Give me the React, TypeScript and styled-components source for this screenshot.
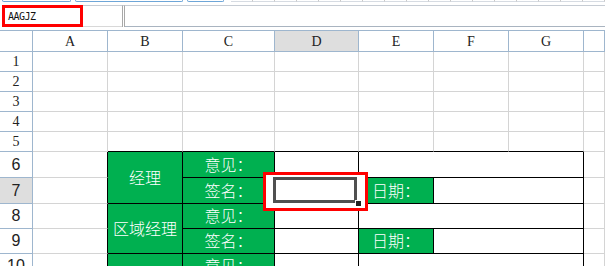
import React from 'react'
import styled, { createGlobalStyle } from 'styled-components'

const GRID = '#d4d4d4'
const HEAD = '#9eb6ce'
const INK = '#000'
const GREEN = '#00b050'

const GlobalStyle = createGlobalStyle`
  html, body {
    margin: 0;
    padding: 0;
    background: #fff;
    overflow: hidden;
  }
  #root {
    width: 605px;
    height: 266px;
    overflow: hidden;
  }
`

const TopStrip = styled.div`
  display: flex;
  align-items: flex-start;
  height: 5px;
  padding-left: 2px;
  gap: 4px;
`

const TabStub = styled.div<{ $w: number }>`
  width: ${p => p.$w}px;
  height: 1px;
  border: 1px solid #6ea6d8;
  border-top: none;
  border-radius: 0 0 3px 3px;
`

const TickRow = styled.div`
  flex: 1;
  height: 2px;
  display: flex;
  margin-left: 3px;
`

const Tick = styled.div`
  width: 22px;
  flex: none;
  border-right: 1px solid #c9c9c9;
  border-bottom: 1px solid #d6dbe2;
  box-sizing: border-box;
`

const FormulaRow = styled.div`
  display: flex;
  height: 22px;
`

const NameBox = styled.div`
  box-sizing: border-box;
  margin-left: 2px;
  width: 81px;
  height: 22px;
  border: 3px solid #ff0000;
  display: flex;
  align-items: center;
  padding-left: 3px;
  font-family: 'DejaVu Sans Mono', 'Liberation Mono', monospace;
  font-size: 10px;
  letter-spacing: -0.5px;
  color: #111;
`

const NameGap = styled.div`
  width: 39px;
  border-top: 1px solid #c6ccd4;
  border-bottom: 1px solid #d8d8d8;
  box-sizing: border-box;
`

const Divider = styled.div`
  width: 3px;
  box-sizing: border-box;
  border-left: 1px solid #a8a8a8;
  border-right: 1px solid #a8a8a8;
  border-top: 1px solid #c6ccd4;
`

const FormulaInput = styled.div`
  flex: 1;
  box-sizing: border-box;
  border-top: 1px solid #c6ccd4;
  border-bottom: 1px solid #a9b4c0;
`

const Sheet = styled.div`
  margin-top: 3px;
  display: grid;
  grid-template-columns: 33px 75px 75px 92px 84px 75px 75px 75px 1fr;
  grid-template-rows: 21px repeat(5, 20px) 26px 26px 25px 25px 25px;
  border-top: 1px solid ${HEAD};
`

const Cell = styled.div<{ $r?: string; $b?: string; $cols?: number; $rows?: number }>`
  box-sizing: border-box;
  position: relative;
  border-right: 1px solid ${p => p.$r ?? GRID};
  border-bottom: 1px solid ${p => p.$b ?? GRID};
  grid-column: span ${p => p.$cols ?? 1};
  grid-row: span ${p => p.$rows ?? 1};
  background: #fff;
  display: flex;
  align-items: center;
  justify-content: center;
`

const GreenCell = styled(Cell)`
  background: ${GREEN};
  color: #fff;
  font-family: 'Noto Sans CJK SC', 'Noto Sans', sans-serif;
  font-size: 16px;
  font-weight: 300;
  line-height: 1;
  padding-bottom: 2px;
`

const ColHead = styled(Cell)<{ $sel?: boolean }>`
  border-right-color: ${HEAD};
  border-bottom-color: ${HEAD};
  background: ${p => (p.$sel ? '#dedede' : '#fff')};
  font-family: 'Liberation Serif', 'Times New Roman', serif;
  font-size: 14px;
  color: #222;
  padding-top: 1px;
`

const RowHead = styled(Cell)<{ $sel?: boolean; $big?: boolean }>`
  border-right-color: ${HEAD};
  border-bottom-color: ${HEAD};
  background: ${p => (p.$sel ? '#dedede' : '#fff')};
  font-family: ${p =>
    p.$big ? "'Liberation Sans', Arial, sans-serif" : "'Liberation Serif', 'Times New Roman', serif"};
  font-size: ${p => (p.$big ? 16 : 14)}px;
  color: #222;
`

const Annotation = styled.div`
  position: absolute;
  left: -12px;
  top: -6px;
  width: 105px;
  height: 39px;
  box-sizing: border-box;
  border: 3px solid #ff0000;
  background: #fff;
  z-index: 2;
`

const Selection = styled.div`
  position: absolute;
  left: -2px;
  top: -1px;
  width: 84px;
  height: 26px;
  box-sizing: border-box;
  border: 3px solid #505050;
  z-index: 3;
`

const FillHandle = styled.div`
  position: absolute;
  left: 80px;
  top: 22px;
  width: 7px;
  height: 7px;
  box-sizing: border-box;
  border: 1px solid #fff;
  background: #222;
  z-index: 4;
`

const columns = ['A', 'B', 'C', 'D', 'E', 'F', 'G', '']

export default function App() {
  return (
    <>
      <GlobalStyle />
      <TopStrip>
        <TabStub $w={68} />
        <TabStub $w={107} />
        <TabStub $w={36} />
        <TickRow>
          {Array.from({ length: 17 }).map((_, i) => (
            <Tick key={i} />
          ))}
        </TickRow>
      </TopStrip>
      <FormulaRow>
        <NameBox>AAGJZ</NameBox>
        <NameGap />
        <Divider />
        <FormulaInput />
      </FormulaRow>
      <Sheet>
        <ColHead />
        {columns.map((c, i) => (
          <ColHead key={i} $sel={c === 'D'}>
            {c}
          </ColHead>
        ))}

        {[1, 2, 3, 4].map(n => (
          <React.Fragment key={n}>
            <RowHead>{n}</RowHead>
            {columns.map((_, i) => (
              <Cell key={i} />
            ))}
          </React.Fragment>
        ))}

        <RowHead>5</RowHead>
        <Cell />
        {[1, 2, 3, 4, 5, 6].map(i => (
          <Cell key={i} $b={INK} />
        ))}
        <Cell />

        <RowHead $big>6</RowHead>
        <Cell $r={INK} />
        <GreenCell $r={INK} $b={INK} $rows={2}>经理</GreenCell>
        <GreenCell $r={INK} $b={INK}>意见：</GreenCell>
        <Cell $r={INK} $b={INK} />
        <Cell $r={INK} $b={INK} $cols={3} />
        <Cell />

        <RowHead $big $sel>7</RowHead>
        <Cell $r={INK} />
        <GreenCell $r={INK} $b={INK}>签名：</GreenCell>
        <Cell $r={INK} $b={INK}>
          <Annotation />
          <Selection />
          <FillHandle />
        </Cell>
        <GreenCell $r={INK} $b={INK}>日期：</GreenCell>
        <Cell $r={INK} $b={INK} $cols={2} />
        <Cell />

        <RowHead $big>8</RowHead>
        <Cell $r={INK} />
        <GreenCell $r={INK} $b={INK} $rows={2}>区域经理</GreenCell>
        <GreenCell $r={INK} $b={INK}>意见：</GreenCell>
        <Cell $r={INK} $b={INK} />
        <Cell $r={INK} $b={INK} $cols={3} />
        <Cell />

        <RowHead $big>9</RowHead>
        <Cell $r={INK} />
        <GreenCell $r={INK} $b={INK}>签名：</GreenCell>
        <Cell $r={INK} $b={INK} />
        <GreenCell $r={INK} $b={INK}>日期：</GreenCell>
        <Cell $r={INK} $b={INK} $cols={2} />
        <Cell />

        <RowHead $big>10</RowHead>
        <Cell $r={INK} />
        <GreenCell $r={INK} $b={INK} />
        <GreenCell $r={INK} $b={INK}>意见：</GreenCell>
        <Cell $r={INK} $b={INK} />
        <Cell $r={INK} $b={INK} $cols={3} />
        <Cell />
      </Sheet>
    </>
  )
}
